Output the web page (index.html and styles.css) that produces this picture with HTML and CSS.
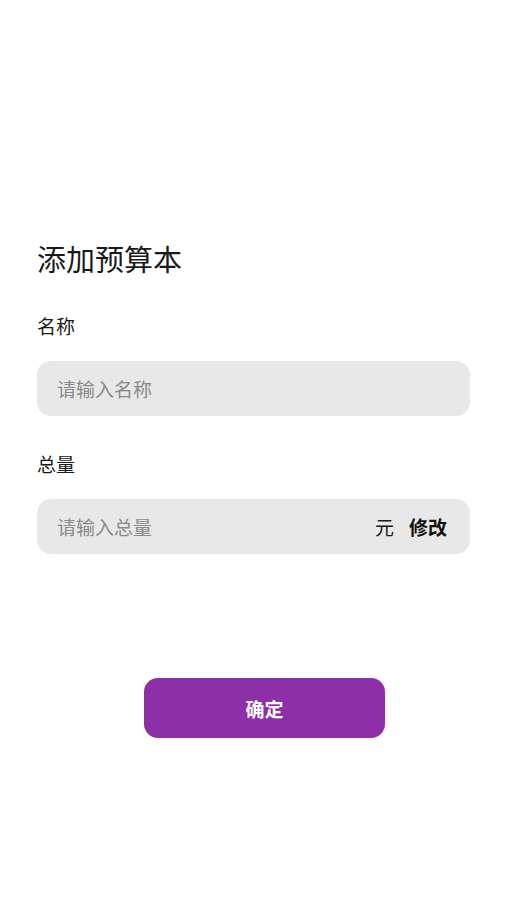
FILE: index.html
```html
<!DOCTYPE html>
<html lang="zh">
<head>
<meta charset="utf-8">
<link rel="stylesheet" href="styles.css">
</head>
<body>
<div class="page">
  <h1 class="title">添加预算本</h1>
  <div class="field">
    <div class="label">名称</div>
    <div class="input"><span class="placeholder">请输入名称</span></div>
  </div>
  <div class="field">
    <div class="label">总量</div>
    <div class="input">
      <span class="placeholder">请输入总量</span>
      <span class="unit">元</span>
      <span class="edit">修改</span>
    </div>
  </div>
  <div class="actions">
    <button class="confirm">确定</button>
  </div>
</div>
</body>
</html>
```
FILE: styles.css
```css
* { box-sizing: border-box; }
body {
  margin: 0;
  background: #fff;
  font-family: "Noto Sans CJK SC", "Noto Sans", sans-serif;
  color: #1c1c1c;
}
.page {
  padding: 238px 37px 0 37px;
  display: flex;
  flex-direction: column;
}
.title {
  margin: 0;
  font-size: 29px;
  font-weight: 400;
  line-height: 40px;
  color: #1a1a1a;
}
.field {
  margin-top: 36px;
  display: flex;
  flex-direction: column;
  gap: 23px;
}
.label {
  font-size: 19px;
  line-height: 24px;
  color: #1a1a1a;
}
.input {
  height: 55px;
  border-radius: 14px;
  background: #e8e8e8;
  display: flex;
  align-items: center;
  padding: 0 23px 0 20px;
  font-size: 19px;
}
.placeholder {
  color: #8a8a8a;
  flex: 1;
}
.unit {
  color: #1a1a1a;
  margin-right: 15px;
}
.edit {
  color: #111;
  font-weight: 700;
}
.actions {
  display: flex;
  justify-content: center;
  margin-top: 124px;
  padding-left: 22px;
}
.confirm {
  width: 241px;
  height: 60px;
  border: none;
  border-radius: 14px;
  background: #8d30a8;
  color: #fff;
  font-family: inherit;
  font-size: 19px;
  font-weight: 700;
}
```
